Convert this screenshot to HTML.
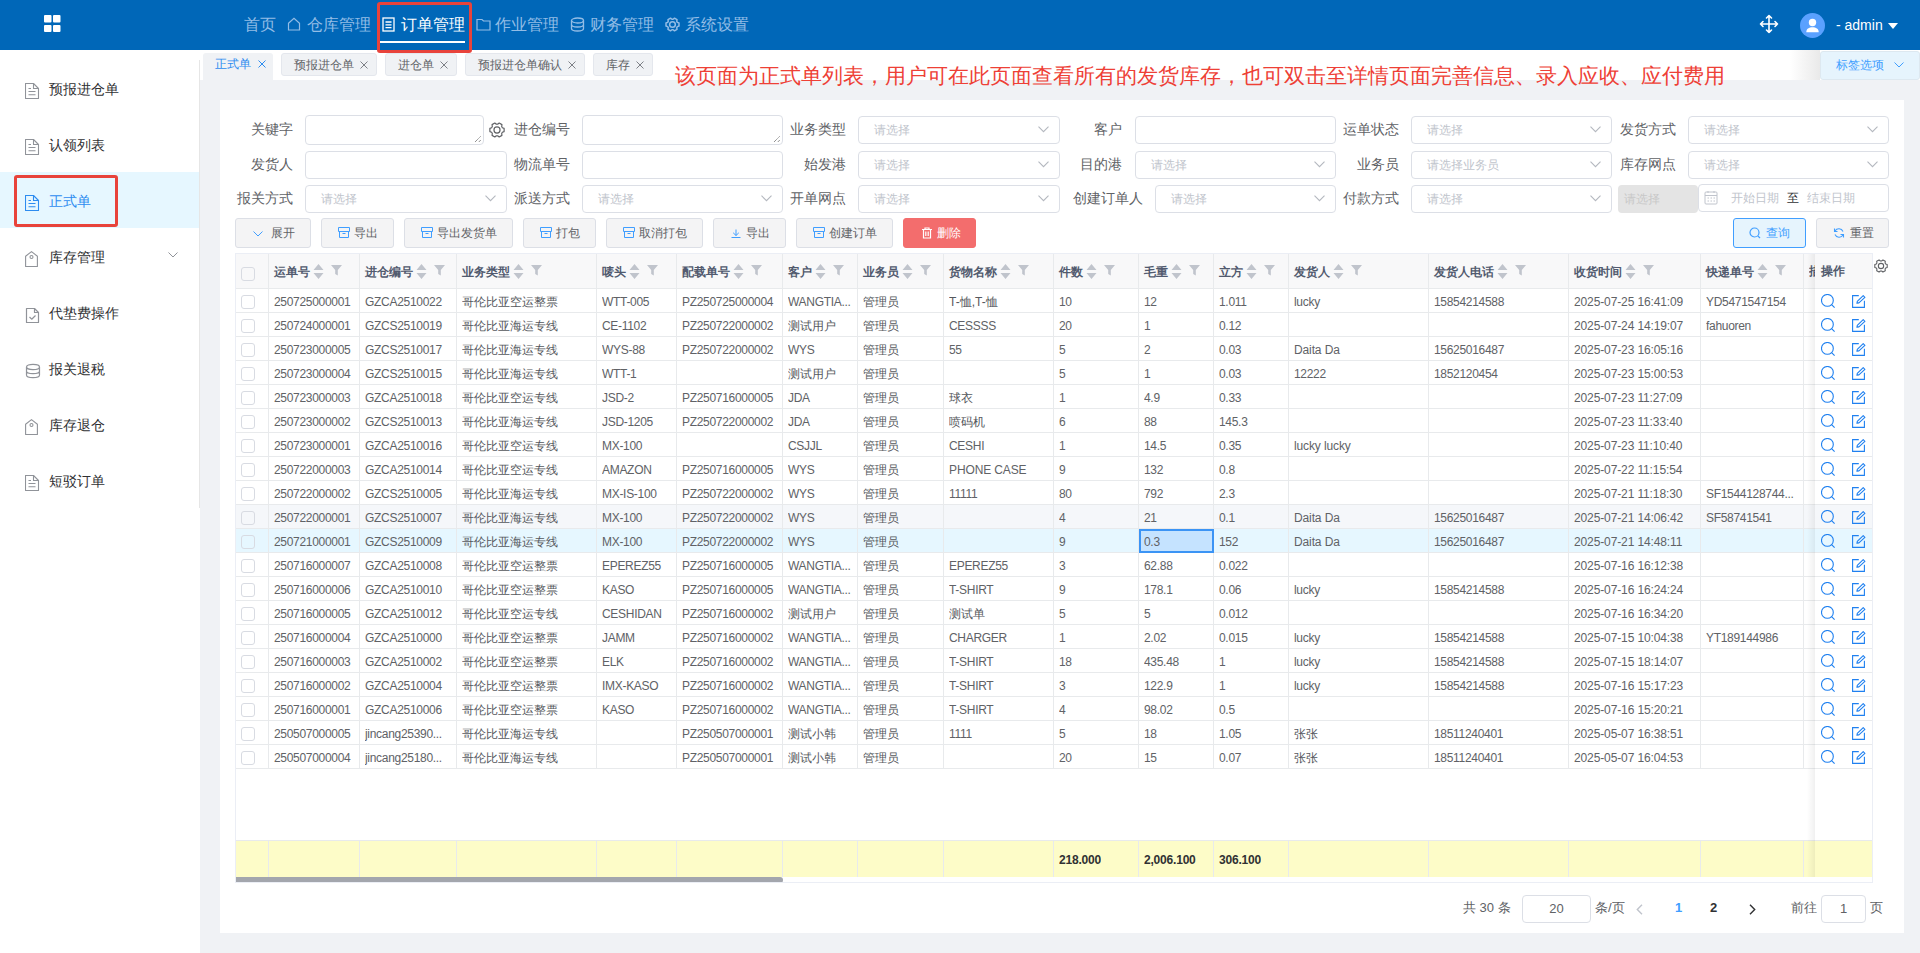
<!DOCTYPE html><html><head><meta charset="utf-8"><style>
*{box-sizing:border-box;margin:0;padding:0}
html,body{width:1920px;height:953px;overflow:hidden}
body{position:relative;background:#f0f2f5;font-family:"Liberation Sans",sans-serif;color:#606266;font-size:12px}
.a{position:absolute}
.hdr{left:0;top:0;width:1920px;height:50px;background:#0067b8}
.nav{top:0;height:50px;line-height:50px;font-size:16px;color:#93bde6;white-space:nowrap}
.nav.on{color:#fff}
.side{left:0;top:50px;width:200px;height:903px;background:#fff}
.sbord{left:199px;top:60px;width:1px;height:448px;background:#e6e6e6}
.mi{left:0;width:199px;height:56px;font-size:14px;color:#303133;line-height:56px}
.mi span{position:absolute;left:49px;top:1px}
.mi svg{position:absolute;left:25px;top:23px}
.tabbar{left:200px;top:50px;width:1720px;height:30px;background:#fff}
.tab{top:53px;height:23px;line-height:22px;font-size:12px;color:#606266;background:#f0f2f5;border:1px solid #e4e7ed;border-radius:3px;white-space:nowrap}
.tab .x{position:absolute;top:0;font-size:12px}
.card{left:220px;top:100px;width:1684px;height:833px;background:#fff}
.lbl{font-size:14px;color:#606266;line-height:18px;white-space:nowrap;text-align:right}
.inp{background:#fff;border:1px solid #dcdfe6;border-radius:4px}
.ph{position:absolute;left:15px;top:0;font-size:12px;color:#c0c4cc;white-space:nowrap}
.chev{position:absolute;right:10px;top:50%;margin-top:-4px}
.btn{top:218px;height:30px;border:1px solid #dcdfe6;background:#f4f4f5;border-radius:3px;font-size:12px;color:#606266;line-height:28px;white-space:nowrap}
.btn svg{position:absolute;top:8px}
.btn span{position:absolute;top:0}
.tbl{left:235px;top:253px;width:1638px;height:630px;border:1px solid #ebeef5;background:#fff;overflow:hidden}
.cell{position:absolute;height:24px;line-height:24px;font-size:12px;color:#606266;white-space:nowrap;overflow:hidden}
.hcell{position:absolute;height:35px;line-height:35px;font-size:12px;font-weight:bold;color:#515a6e;white-space:nowrap}
.vl{position:absolute;width:1px;background:#e8eaec}
.hl{position:absolute;height:1px;background:#e8eaec}
.cb{position:absolute;width:14px;height:14px;border:1.5px solid #d8dbe2;border-radius:3px}
</style></head><body><div class="a hdr"></div><svg class="a" style="left:43px;top:14px" width="19" height="19" viewBox="0 0 19 19" fill="#fff"><rect x="1" y="1" width="7.5" height="7.5" rx="1"/><rect x="10" y="1" width="7.5" height="7.5" rx="1"/><rect x="1" y="11" width="7.5" height="7" rx="1"/><rect x="10" y="11" width="7.5" height="7" rx="1"/></svg><div class="a nav" style="left:244px">首页</div><div class="a nav" style="left:307px">仓库管理</div><div class="a nav on" style="left:401px">订单管理</div><div class="a nav" style="left:495px">作业管理</div><div class="a nav" style="left:590px">财务管理</div><div class="a nav" style="left:685px">系统设置</div><svg class="a" style="left:287px;top:17px" width="14" height="14" viewBox="0 0 14 14" fill="none" stroke="#93bde6" stroke-width="1.2"><path d="M1.5 6.2 L7 1.2 L12.5 6.2 V13 H1.5 Z"/></svg><svg class="a" style="left:382px;top:17px" width="13" height="15" viewBox="0 0 13 15" fill="none" stroke="#fff" stroke-width="1.3"><rect x="1" y="1" width="11" height="13"/><path d="M3.5 5H9.5M3.5 7.8H9.5M3.5 10.6H9.5"/></svg><svg class="a" style="left:476px;top:18px" width="15" height="13" viewBox="0 0 15 13" fill="none" stroke="#93bde6" stroke-width="1.2"><path d="M1 1.5H6L7.5 3H14V12H1Z"/></svg><svg class="a" style="left:570px;top:17px" width="15" height="15" viewBox="0 0 15 15" fill="none" stroke="#93bde6" stroke-width="1.3"><ellipse cx="7.5" cy="3.5" rx="6" ry="2.5"/><path d="M1.5 3.5V11.5C1.5 12.9 4.2 14 7.5 14S13.5 12.9 13.5 11.5V3.5M1.5 7.5C1.5 8.9 4.2 10 7.5 10S13.5 8.9 13.5 7.5"/></svg><svg class="a" style="left:665px;top:17px" width="15" height="15" viewBox="0 0 15 15" fill="none" stroke="#93bde6" stroke-width="1.5" stroke-linejoin="round"><path d="M12.38 5.39 L13.99 6.05 L13.99 8.95 L12.38 9.61 L11.77 10.67 L12.00 12.40 L9.49 13.85 L8.11 12.78 L6.89 12.78 L5.51 13.85 L3.00 12.40 L3.23 10.67 L2.62 9.61 L1.01 8.95 L1.01 6.05 L2.62 5.39 L3.23 4.33 L3.00 2.60 L5.51 1.15 L6.89 2.22 L8.11 2.22 L9.49 1.15 L12.00 2.60 L11.77 4.33Z"/><circle cx="7.5" cy="7.5" r="2.85"/></svg><div class="a" style="left:377px;top:2px;width:95px;height:51px;border:3px solid #e8433b;border-radius:3px;z-index:10"></div><div class="a" style="left:380px;top:41px;width:85px;height:2px;background:#fff"></div><svg class="a" style="left:1759px;top:14px" width="20" height="20" viewBox="0 0 20 20" fill="none" stroke="#fff" stroke-width="1.6" stroke-linecap="round" stroke-linejoin="round"><path d="M10 1.5V18.5M1.5 10H18.5M7.5 4L10 1.5L12.5 4M7.5 16L10 18.5L12.5 16M4 7.5L1.5 10L4 12.5M16 7.5L18.5 10L16 12.5"/></svg><div class="a" style="left:1800px;top:13px;width:25px;height:25px;border-radius:50%;background:#5aa1ff"></div><svg class="a" style="left:1800px;top:13px" width="25" height="25" viewBox="0 0 25 25" fill="#fff"><circle cx="12.5" cy="9.5" r="3.7"/><path d="M6.3 19.3C6.3 15.6 9 14.2 12.5 14.2S18.7 15.6 18.7 19.3Z"/></svg><div class="a" style="left:1836px;top:16px;font-size:14px;color:#fff;line-height:18px;white-space:nowrap">- admin</div><svg class="a" style="left:1888px;top:23px" width="10" height="6" viewBox="0 0 10 6" fill="#fff"><path d="M0 0H10L5 6Z"/></svg><div class="a side"></div><div class="a sbord"></div><div class="a mi" style="top:60px;"><svg width="15" height="17" viewBox="0 0 15 17" fill="none" stroke="#909399" stroke-width="1.1" stroke-linejoin="round"><path d="M0.5 0.5H8.5L13.5 5.5V15.5H0.5Z"/><path d="M8.5 0.5V5.5H13.5"/><path d="M3.5 5.5H6M3.5 8.5H10.5M3.5 11.8H10.5"/></svg><span style="">预报进仓单</span></div><div class="a mi" style="top:116px;"><svg width="15" height="17" viewBox="0 0 15 17" fill="none" stroke="#909399" stroke-width="1.1" stroke-linejoin="round"><path d="M0.5 0.5H8.5L13.5 5.5V15.5H0.5Z"/><path d="M8.5 0.5V5.5H13.5"/><path d="M3.5 5.5H6M3.5 8.5H10.5M3.5 11.8H10.5"/></svg><span style="">认领列表</span></div><div class="a mi" style="top:172px;background:#e6f7ff;"><svg width="15" height="17" viewBox="0 0 15 17" fill="none" stroke="#2d8cf0" stroke-width="1.1" stroke-linejoin="round"><path d="M0.5 0.5H8.5L13.5 5.5V15.5H0.5Z"/><path d="M8.5 0.5V5.5H13.5"/><path d="M3.5 5.5H6M3.5 8.5H10.5M3.5 11.8H10.5"/></svg><span style="color:#2d8cf0;">正式单</span></div><div class="a mi" style="top:228px;"><svg width="14" height="17" viewBox="0 0 14 17" fill="none" stroke="#909399" stroke-width="1.1" stroke-linejoin="round"><path d="M6.5 0.6L12.4 5.2V15.5H0.6V5.2Z"/><circle cx="6.5" cy="6" r="1.5"/></svg><span style="">库存管理</span></div><div class="a mi" style="top:284px;"><svg width="15" height="17" viewBox="0 0 15 17" fill="none" stroke="#909399" stroke-width="1.2" stroke-linejoin="round"><path d="M1.5 1.5H9.5L13.5 5.5V15.5H1.5Z"/><path d="M9.5 1.5V5.5H13.5"/><path d="M4.5 10L6.7 12.2L10.5 8.5"/></svg><span style="">代垫费操作</span></div><div class="a mi" style="top:340px;"><svg width="16" height="16" viewBox="0 0 16 16" fill="none" stroke="#909399" stroke-width="1.2"><ellipse cx="8" cy="4" rx="6.5" ry="2.6"/><path d="M1.5 4V12C1.5 13.4 4.4 14.6 8 14.6S14.5 13.4 14.5 12V4M1.5 8C1.5 9.4 4.4 10.6 8 10.6S14.5 9.4 14.5 8"/></svg><span style="">报关退税</span></div><div class="a mi" style="top:396px;"><svg width="14" height="17" viewBox="0 0 14 17" fill="none" stroke="#909399" stroke-width="1.1" stroke-linejoin="round"><path d="M6.5 0.6L12.4 5.2V15.5H0.6V5.2Z"/><circle cx="6.5" cy="6" r="1.5"/></svg><span style="">库存退仓</span></div><div class="a mi" style="top:452px;"><svg width="15" height="17" viewBox="0 0 15 17" fill="none" stroke="#909399" stroke-width="1.1" stroke-linejoin="round"><path d="M0.5 0.5H8.5L13.5 5.5V15.5H0.5Z"/><path d="M8.5 0.5V5.5H13.5"/><path d="M3.5 5.5H6M3.5 8.5H10.5M3.5 11.8H10.5"/></svg><span style="">短驳订单</span></div><svg class="a" style="left:168px;top:252px" width="10" height="6" viewBox="0 0 10 6" fill="none" stroke="#909399" stroke-width="1"><path d="M0.5 0.5L5 5L9.5 0.5"/></svg><div class="a" style="left:14px;top:175px;width:104px;height:52px;border:3px solid #e8433b;border-radius:3px;z-index:10"></div><div class="a tabbar"></div><div class="a" style="left:203px;top:53px;width:70px;height:27px;background:#f0f2f5;border-radius:3px 3px 0 0"></div><div class="a" style="left:215px;top:53px;font-size:12px;line-height:22px;color:#2d8cf0;white-space:nowrap">正式单</div><svg class="a" style="left:258px;top:60px" width="8" height="8" viewBox="0 0 8 8" stroke="#2d8cf0" stroke-width="1"><path d="M0.5 0.5L7.5 7.5M7.5 0.5L0.5 7.5"/></svg><div class="a tab" style="left:281px;width:96px"><span class="a" style="left:12px;top:0">预报进仓单</span><svg class="x" style="right:8px;top:7px" width="8" height="8" viewBox="0 0 8 8" stroke="#7d8086" stroke-width="1"><path d="M0.5 0.5L7.5 7.5M7.5 0.5L0.5 7.5"/></svg></div><div class="a tab" style="left:385px;width:72px"><span class="a" style="left:12px;top:0">进仓单</span><svg class="x" style="right:8px;top:7px" width="8" height="8" viewBox="0 0 8 8" stroke="#7d8086" stroke-width="1"><path d="M0.5 0.5L7.5 7.5M7.5 0.5L0.5 7.5"/></svg></div><div class="a tab" style="left:465px;width:120px"><span class="a" style="left:12px;top:0">预报进仓单确认</span><svg class="x" style="right:8px;top:7px" width="8" height="8" viewBox="0 0 8 8" stroke="#7d8086" stroke-width="1"><path d="M0.5 0.5L7.5 7.5M7.5 0.5L0.5 7.5"/></svg></div><div class="a tab" style="left:593px;width:60px"><span class="a" style="left:12px;top:0">库存</span><svg class="x" style="right:8px;top:7px" width="8" height="8" viewBox="0 0 8 8" stroke="#7d8086" stroke-width="1"><path d="M0.5 0.5L7.5 7.5M7.5 0.5L0.5 7.5"/></svg></div><div class="a" style="left:675px;top:61px;font-size:21px;line-height:30px;color:#ee4036;white-space:nowrap">该页面为正式单列表，用户可在此页面查看所有的发货库存，也可双击至详情页面完善信息、录入应收、应付费用</div><div class="a" style="left:1790px;top:50px;width:30px;height:30px;background:linear-gradient(to right,rgba(255,255,255,0),#e9e9e9)"></div><div class="a" style="left:1820px;top:51px;width:100px;height:29px;background:#e6f4fd;border:1px solid #dde8f0;border-radius:3px"></div><div class="a" style="left:1836px;top:55px;font-size:12px;line-height:20px;color:#409eff;white-space:nowrap">标签选项</div><svg class="a" style="left:1894px;top:62px" width="10" height="6" viewBox="0 0 10 6" fill="none" stroke="#409eff" stroke-width="1"><path d="M0.5 0.5L5 5L9.5 0.5"/></svg><div class="a card"></div><div class="a lbl" style="right:1627px;top:120px">关键字</div><div class="a inp" style="left:305px;top:115px;width:179px;height:30px;"><svg style="position:absolute;right:1px;bottom:1px" width="8" height="8" viewBox="0 0 8 8" stroke="#555" stroke-width="0.9" stroke-dasharray="1 0.7"><path d="M1 7L7 1M4.8 7L7 4.8"/></svg></div><svg class="a" style="left:489px;top:122px" width="16" height="16" viewBox="0 0 16 16" fill="none" stroke="#606266" stroke-width="1.2" stroke-linejoin="round"><path d="M13.36 5.68 L15.12 6.41 L15.12 9.59 L13.36 10.32 L12.69 11.48 L12.94 13.37 L10.18 14.97 L8.67 13.80 L7.33 13.80 L5.82 14.97 L3.06 13.37 L3.31 11.48 L2.64 10.32 L0.88 9.59 L0.88 6.41 L2.64 5.68 L3.31 4.52 L3.06 2.63 L5.82 1.03 L7.33 2.20 L8.67 2.20 L10.18 1.03 L12.94 2.63 L12.69 4.52Z"/><circle cx="8.0" cy="8.0" r="3.04"/></svg><div class="a lbl" style="right:1350px;top:120px">进仓编号</div><div class="a inp" style="left:582px;top:115px;width:201px;height:30px;"><svg style="position:absolute;right:1px;bottom:1px" width="8" height="8" viewBox="0 0 8 8" stroke="#555" stroke-width="0.9" stroke-dasharray="1 0.7"><path d="M1 7L7 1M4.8 7L7 4.8"/></svg></div><div class="a lbl" style="right:1074px;top:120px">业务类型</div><div class="a inp" style="left:858px;top:116px;width:202px;height:28px;"><span class="ph" style="line-height:26px">请选择</span><svg class="chev" width="11" height="7" viewBox="0 0 11 7" fill="none" stroke="#b4b8bf" stroke-width="1.1"><path d="M0.5 0.7L5.5 5.7L10.5 0.7"/></svg></div><div class="a lbl" style="right:798px;top:120px">客户</div><div class="a inp" style="left:1135px;top:116px;width:201px;height:28px;"></div><div class="a lbl" style="right:521px;top:120px">运单状态</div><div class="a inp" style="left:1411px;top:116px;width:201px;height:28px;"><span class="ph" style="line-height:26px">请选择</span><svg class="chev" width="11" height="7" viewBox="0 0 11 7" fill="none" stroke="#b4b8bf" stroke-width="1.1"><path d="M0.5 0.7L5.5 5.7L10.5 0.7"/></svg></div><div class="a lbl" style="right:244px;top:120px">发货方式</div><div class="a inp" style="left:1688px;top:116px;width:201px;height:28px;"><span class="ph" style="line-height:26px">请选择</span><svg class="chev" width="11" height="7" viewBox="0 0 11 7" fill="none" stroke="#b4b8bf" stroke-width="1.1"><path d="M0.5 0.7L5.5 5.7L10.5 0.7"/></svg></div><div class="a lbl" style="right:1627px;top:155px">发货人</div><div class="a inp" style="left:305px;top:151px;width:202px;height:28px;"></div><div class="a lbl" style="right:1350px;top:155px">物流单号</div><div class="a inp" style="left:582px;top:151px;width:201px;height:28px;"></div><div class="a lbl" style="right:1074px;top:155px">始发港</div><div class="a inp" style="left:858px;top:151px;width:202px;height:28px;"><span class="ph" style="line-height:26px">请选择</span><svg class="chev" width="11" height="7" viewBox="0 0 11 7" fill="none" stroke="#b4b8bf" stroke-width="1.1"><path d="M0.5 0.7L5.5 5.7L10.5 0.7"/></svg></div><div class="a lbl" style="right:798px;top:155px">目的港</div><div class="a inp" style="left:1135px;top:151px;width:201px;height:28px;"><span class="ph" style="line-height:26px">请选择</span><svg class="chev" width="11" height="7" viewBox="0 0 11 7" fill="none" stroke="#b4b8bf" stroke-width="1.1"><path d="M0.5 0.7L5.5 5.7L10.5 0.7"/></svg></div><div class="a lbl" style="right:521px;top:155px">业务员</div><div class="a inp" style="left:1411px;top:151px;width:201px;height:28px;"><span class="ph" style="line-height:26px">请选择业务员</span><svg class="chev" width="11" height="7" viewBox="0 0 11 7" fill="none" stroke="#b4b8bf" stroke-width="1.1"><path d="M0.5 0.7L5.5 5.7L10.5 0.7"/></svg></div><div class="a lbl" style="right:244px;top:155px">库存网点</div><div class="a inp" style="left:1688px;top:151px;width:201px;height:28px;"><span class="ph" style="line-height:26px">请选择</span><svg class="chev" width="11" height="7" viewBox="0 0 11 7" fill="none" stroke="#b4b8bf" stroke-width="1.1"><path d="M0.5 0.7L5.5 5.7L10.5 0.7"/></svg></div><div class="a lbl" style="right:1627px;top:189px">报关方式</div><div class="a inp" style="left:305px;top:185px;width:202px;height:28px;"><span class="ph" style="line-height:26px">请选择</span><svg class="chev" width="11" height="7" viewBox="0 0 11 7" fill="none" stroke="#b4b8bf" stroke-width="1.1"><path d="M0.5 0.7L5.5 5.7L10.5 0.7"/></svg></div><div class="a lbl" style="right:1350px;top:189px">派送方式</div><div class="a inp" style="left:582px;top:185px;width:201px;height:28px;"><span class="ph" style="line-height:26px">请选择</span><svg class="chev" width="11" height="7" viewBox="0 0 11 7" fill="none" stroke="#b4b8bf" stroke-width="1.1"><path d="M0.5 0.7L5.5 5.7L10.5 0.7"/></svg></div><div class="a lbl" style="right:1074px;top:189px">开单网点</div><div class="a inp" style="left:858px;top:185px;width:202px;height:28px;"><span class="ph" style="line-height:26px">请选择</span><svg class="chev" width="11" height="7" viewBox="0 0 11 7" fill="none" stroke="#b4b8bf" stroke-width="1.1"><path d="M0.5 0.7L5.5 5.7L10.5 0.7"/></svg></div><div class="a lbl" style="right:777px;top:189px">创建订单人</div><div class="a inp" style="left:1155px;top:185px;width:181px;height:28px;"><span class="ph" style="line-height:26px">请选择</span><svg class="chev" width="11" height="7" viewBox="0 0 11 7" fill="none" stroke="#b4b8bf" stroke-width="1.1"><path d="M0.5 0.7L5.5 5.7L10.5 0.7"/></svg></div><div class="a lbl" style="right:521px;top:189px">付款方式</div><div class="a inp" style="left:1411px;top:185px;width:201px;height:28px;"><span class="ph" style="line-height:26px">请选择</span><svg class="chev" width="11" height="7" viewBox="0 0 11 7" fill="none" stroke="#b4b8bf" stroke-width="1.1"><path d="M0.5 0.7L5.5 5.7L10.5 0.7"/></svg></div><div class="a" style="left:1618px;top:185px;width:80px;height:28px;background:#e4e4e4;border-radius:4px"><span class="ph" style="left:6px;line-height:28px;color:#c8c8c8">请选择</span></div><div class="a inp" style="left:1698px;top:184px;width:191px;height:28px"></div><svg class="a" style="left:1704px;top:190px" width="14" height="15" viewBox="0 0 14 15" fill="none" stroke="#c0c4cc" stroke-width="1"><rect x="1" y="2" width="12" height="12" rx="1"/><path d="M1 5.5H13M4 1V3M10 1V3M3.5 8H5M6.5 8H8M9.5 8H11M3.5 11H5M6.5 11H8M9.5 11H11"/></svg><div class="a" style="left:1731px;top:188px;font-size:12px;line-height:20px;color:#c0c4cc;white-space:nowrap">开始日期</div><div class="a" style="left:1787px;top:188px;font-size:12px;line-height:20px;color:#303133">至</div><div class="a" style="left:1807px;top:188px;font-size:12px;line-height:20px;color:#c0c4cc;white-space:nowrap">结束日期</div><div class="a btn" style="left:235px;width:76px"><svg style="position:absolute;left:17px;top:12px" width="10" height="6" viewBox="0 0 10 6" fill="none" stroke="#409eff" stroke-width="1"><path d="M0.5 0.5L5 5L9.5 0.5"/></svg><span style="left:34.5px">展开</span></div><div class="a btn" style="left:321px;width:73px"><svg style="position:absolute;left:16px;top:8px" width="12" height="11" viewBox="0 0 12 11" fill="none" stroke="#409eff" stroke-width="1"><path d="M0.5 0.5H11.5V4.5H0.5Z"/><path d="M1.5 4.5V10.5H10.5V4.5M4.5 6.5H7.5"/></svg><span style="left:32.0px">导出</span></div><div class="a btn" style="left:404px;width:109px"><svg style="position:absolute;left:16px;top:8px" width="12" height="11" viewBox="0 0 12 11" fill="none" stroke="#409eff" stroke-width="1"><path d="M0.5 0.5H11.5V4.5H0.5Z"/><path d="M1.5 4.5V10.5H10.5V4.5M4.5 6.5H7.5"/></svg><span style="left:31.5px">导出发货单</span></div><div class="a btn" style="left:523px;width:73px"><svg style="position:absolute;left:16px;top:8px" width="12" height="11" viewBox="0 0 12 11" fill="none" stroke="#409eff" stroke-width="1"><path d="M0.5 0.5H11.5V4.5H0.5Z"/><path d="M1.5 4.5V10.5H10.5V4.5M4.5 6.5H7.5"/></svg><span style="left:32.0px">打包</span></div><div class="a btn" style="left:606px;width:97px"><svg style="position:absolute;left:16px;top:8px" width="12" height="11" viewBox="0 0 12 11" fill="none" stroke="#409eff" stroke-width="1"><path d="M0.5 0.5H11.5V4.5H0.5Z"/><path d="M1.5 4.5V10.5H10.5V4.5M4.5 6.5H7.5"/></svg><span style="left:31.799999999999955px">取消打包</span></div><div class="a btn" style="left:713px;width:73px"><svg style="position:absolute;left:17px;top:10px" width="10" height="9" viewBox="0 0 10 9" fill="none" stroke="#409eff" stroke-width="1"><path d="M5 0.5V6.5M2.2 3.8L5 6.5L7.8 3.8M0.5 8.5H9.5"/></svg><span style="left:31.5px">导出</span></div><div class="a btn" style="left:796px;width:97px"><svg style="position:absolute;left:16px;top:8px" width="12" height="11" viewBox="0 0 12 11" fill="none" stroke="#409eff" stroke-width="1"><path d="M0.5 0.5H11.5V4.5H0.5Z"/><path d="M1.5 4.5V10.5H10.5V4.5M4.5 6.5H7.5"/></svg><span style="left:31.899999999999977px">创建订单</span></div><div class="a btn" style="left:903px;width:73px;background:#f36d6d;border-color:#f36d6d;color:#fff"><svg style="position:absolute;left:17px;top:8px" width="12" height="12" viewBox="0 0 12 12" fill="none" stroke="#fff" stroke-width="1.2"><path d="M1 2.5H11M4 2.5V1H8V2.5M2.5 2.5V11H9.5V2.5M4.8 4.5V9M7.2 4.5V9"/></svg><span style="left:33px">删除</span></div><div class="a btn" style="left:1733px;width:73px;background:#e6f4fd;border-color:#409eff;color:#409eff"><svg style="position:absolute;left:15px;top:8px" width="12" height="12" viewBox="0 0 12 12" fill="none" stroke="#409eff" stroke-width="1.2"><circle cx="5.5" cy="5.5" r="4.5"/><path d="M8.8 8.8L11 11"/></svg><span style="left:32px">查询</span></div><div class="a btn" style="left:1816px;width:73px"><svg style="position:absolute;left:16px;top:8px" width="12" height="12" viewBox="0 0 12 12" fill="none" stroke="#409eff" stroke-width="1.1"><path d="M10 4.5A4.5 4.5 0 0 0 2 4M2 7.5A4.5 4.5 0 0 0 10 8M1.5 1.5V4.5H4.5M10.5 10.5V7.5H7.5"/></svg><span style="left:33px">重置</span></div><div class="a tbl"><div class="a" style="left:0;top:0;width:1638px;height:35px;background:#f8f8f9"></div><div class="a" style="left:0;top:251px;width:1638px;height:24px;background:#f5f7fa"></div><div class="a" style="left:0;top:275px;width:1638px;height:24px;background:#e6f7ff"></div><div class="a" style="left:0;top:587px;width:1638px;height:36px;background:#fdfcc8"></div><div class="hl" style="left:0;top:34px;width:1638px"></div><div class="hl" style="left:0;top:58px;width:1638px"></div><div class="hl" style="left:0;top:82px;width:1638px"></div><div class="hl" style="left:0;top:106px;width:1638px"></div><div class="hl" style="left:0;top:130px;width:1638px"></div><div class="hl" style="left:0;top:154px;width:1638px"></div><div class="hl" style="left:0;top:178px;width:1638px"></div><div class="hl" style="left:0;top:202px;width:1638px"></div><div class="hl" style="left:0;top:226px;width:1638px"></div><div class="hl" style="left:0;top:250px;width:1638px"></div><div class="hl" style="left:0;top:274px;width:1638px"></div><div class="hl" style="left:0;top:298px;width:1638px"></div><div class="hl" style="left:0;top:322px;width:1638px"></div><div class="hl" style="left:0;top:346px;width:1638px"></div><div class="hl" style="left:0;top:370px;width:1638px"></div><div class="hl" style="left:0;top:394px;width:1638px"></div><div class="hl" style="left:0;top:418px;width:1638px"></div><div class="hl" style="left:0;top:442px;width:1638px"></div><div class="hl" style="left:0;top:466px;width:1638px"></div><div class="hl" style="left:0;top:490px;width:1638px"></div><div class="hl" style="left:0;top:514px;width:1638px"></div><div class="hl" style="left:0;top:586px;width:1638px"></div><div class="vl" style="left:32px;top:0;height:515px"></div><div class="vl" style="left:32px;top:587px;height:36px"></div><div class="vl" style="left:123px;top:0;height:515px"></div><div class="vl" style="left:123px;top:587px;height:36px"></div><div class="vl" style="left:220px;top:0;height:515px"></div><div class="vl" style="left:220px;top:587px;height:36px"></div><div class="vl" style="left:360px;top:0;height:515px"></div><div class="vl" style="left:360px;top:587px;height:36px"></div><div class="vl" style="left:440px;top:0;height:515px"></div><div class="vl" style="left:440px;top:587px;height:36px"></div><div class="vl" style="left:546px;top:0;height:515px"></div><div class="vl" style="left:546px;top:587px;height:36px"></div><div class="vl" style="left:621px;top:0;height:515px"></div><div class="vl" style="left:621px;top:587px;height:36px"></div><div class="vl" style="left:707px;top:0;height:515px"></div><div class="vl" style="left:707px;top:587px;height:36px"></div><div class="vl" style="left:817px;top:0;height:515px"></div><div class="vl" style="left:817px;top:587px;height:36px"></div><div class="vl" style="left:902px;top:0;height:515px"></div><div class="vl" style="left:902px;top:587px;height:36px"></div><div class="vl" style="left:977px;top:0;height:515px"></div><div class="vl" style="left:977px;top:587px;height:36px"></div><div class="vl" style="left:1052px;top:0;height:515px"></div><div class="vl" style="left:1052px;top:587px;height:36px"></div><div class="vl" style="left:1192px;top:0;height:515px"></div><div class="vl" style="left:1192px;top:587px;height:36px"></div><div class="vl" style="left:1332px;top:0;height:515px"></div><div class="vl" style="left:1332px;top:587px;height:36px"></div><div class="vl" style="left:1464px;top:0;height:515px"></div><div class="vl" style="left:1464px;top:587px;height:36px"></div><div class="vl" style="left:1567px;top:0;height:515px"></div><div class="vl" style="left:1567px;top:587px;height:36px"></div><div class="hcell" style="left:38px;top:1px">运单号</div><div style="position:absolute;left:77px;top:-1px"><svg style="position:absolute;top:11px" width="11" height="16" viewBox="0 0 11 16" fill="#c0c4cc"><path d="M5.5 0L10.5 6H0.5Z M5.5 15L10.5 9H0.5Z"/></svg></div><div style="position:absolute;left:95px;top:0"><svg style="position:absolute;top:11px" width="11" height="11" viewBox="0 0 11 11" fill="#c0c4cc"><path d="M0 0H11L6.8 5V10.5L4.2 9V5Z"/></svg></div><div class="hcell" style="left:129px;top:1px">进仓编号</div><div style="position:absolute;left:180px;top:-1px"><svg style="position:absolute;top:11px" width="11" height="16" viewBox="0 0 11 16" fill="#c0c4cc"><path d="M5.5 0L10.5 6H0.5Z M5.5 15L10.5 9H0.5Z"/></svg></div><div style="position:absolute;left:198px;top:0"><svg style="position:absolute;top:11px" width="11" height="11" viewBox="0 0 11 11" fill="#c0c4cc"><path d="M0 0H11L6.8 5V10.5L4.2 9V5Z"/></svg></div><div class="hcell" style="left:226px;top:1px">业务类型</div><div style="position:absolute;left:277px;top:-1px"><svg style="position:absolute;top:11px" width="11" height="16" viewBox="0 0 11 16" fill="#c0c4cc"><path d="M5.5 0L10.5 6H0.5Z M5.5 15L10.5 9H0.5Z"/></svg></div><div style="position:absolute;left:295px;top:0"><svg style="position:absolute;top:11px" width="11" height="11" viewBox="0 0 11 11" fill="#c0c4cc"><path d="M0 0H11L6.8 5V10.5L4.2 9V5Z"/></svg></div><div class="hcell" style="left:366px;top:1px">唛头</div><div style="position:absolute;left:393px;top:-1px"><svg style="position:absolute;top:11px" width="11" height="16" viewBox="0 0 11 16" fill="#c0c4cc"><path d="M5.5 0L10.5 6H0.5Z M5.5 15L10.5 9H0.5Z"/></svg></div><div style="position:absolute;left:411px;top:0"><svg style="position:absolute;top:11px" width="11" height="11" viewBox="0 0 11 11" fill="#c0c4cc"><path d="M0 0H11L6.8 5V10.5L4.2 9V5Z"/></svg></div><div class="hcell" style="left:446px;top:1px">配载单号</div><div style="position:absolute;left:497px;top:-1px"><svg style="position:absolute;top:11px" width="11" height="16" viewBox="0 0 11 16" fill="#c0c4cc"><path d="M5.5 0L10.5 6H0.5Z M5.5 15L10.5 9H0.5Z"/></svg></div><div style="position:absolute;left:515px;top:0"><svg style="position:absolute;top:11px" width="11" height="11" viewBox="0 0 11 11" fill="#c0c4cc"><path d="M0 0H11L6.8 5V10.5L4.2 9V5Z"/></svg></div><div class="hcell" style="left:552px;top:1px">客户</div><div style="position:absolute;left:579px;top:-1px"><svg style="position:absolute;top:11px" width="11" height="16" viewBox="0 0 11 16" fill="#c0c4cc"><path d="M5.5 0L10.5 6H0.5Z M5.5 15L10.5 9H0.5Z"/></svg></div><div style="position:absolute;left:597px;top:0"><svg style="position:absolute;top:11px" width="11" height="11" viewBox="0 0 11 11" fill="#c0c4cc"><path d="M0 0H11L6.8 5V10.5L4.2 9V5Z"/></svg></div><div class="hcell" style="left:627px;top:1px">业务员</div><div style="position:absolute;left:666px;top:-1px"><svg style="position:absolute;top:11px" width="11" height="16" viewBox="0 0 11 16" fill="#c0c4cc"><path d="M5.5 0L10.5 6H0.5Z M5.5 15L10.5 9H0.5Z"/></svg></div><div style="position:absolute;left:684px;top:0"><svg style="position:absolute;top:11px" width="11" height="11" viewBox="0 0 11 11" fill="#c0c4cc"><path d="M0 0H11L6.8 5V10.5L4.2 9V5Z"/></svg></div><div class="hcell" style="left:713px;top:1px">货物名称</div><div style="position:absolute;left:764px;top:-1px"><svg style="position:absolute;top:11px" width="11" height="16" viewBox="0 0 11 16" fill="#c0c4cc"><path d="M5.5 0L10.5 6H0.5Z M5.5 15L10.5 9H0.5Z"/></svg></div><div style="position:absolute;left:782px;top:0"><svg style="position:absolute;top:11px" width="11" height="11" viewBox="0 0 11 11" fill="#c0c4cc"><path d="M0 0H11L6.8 5V10.5L4.2 9V5Z"/></svg></div><div class="hcell" style="left:823px;top:1px">件数</div><div style="position:absolute;left:850px;top:-1px"><svg style="position:absolute;top:11px" width="11" height="16" viewBox="0 0 11 16" fill="#c0c4cc"><path d="M5.5 0L10.5 6H0.5Z M5.5 15L10.5 9H0.5Z"/></svg></div><div style="position:absolute;left:868px;top:0"><svg style="position:absolute;top:11px" width="11" height="11" viewBox="0 0 11 11" fill="#c0c4cc"><path d="M0 0H11L6.8 5V10.5L4.2 9V5Z"/></svg></div><div class="hcell" style="left:908px;top:1px">毛重</div><div style="position:absolute;left:935px;top:-1px"><svg style="position:absolute;top:11px" width="11" height="16" viewBox="0 0 11 16" fill="#c0c4cc"><path d="M5.5 0L10.5 6H0.5Z M5.5 15L10.5 9H0.5Z"/></svg></div><div style="position:absolute;left:953px;top:0"><svg style="position:absolute;top:11px" width="11" height="11" viewBox="0 0 11 11" fill="#c0c4cc"><path d="M0 0H11L6.8 5V10.5L4.2 9V5Z"/></svg></div><div class="hcell" style="left:983px;top:1px">立方</div><div style="position:absolute;left:1010px;top:-1px"><svg style="position:absolute;top:11px" width="11" height="16" viewBox="0 0 11 16" fill="#c0c4cc"><path d="M5.5 0L10.5 6H0.5Z M5.5 15L10.5 9H0.5Z"/></svg></div><div style="position:absolute;left:1028px;top:0"><svg style="position:absolute;top:11px" width="11" height="11" viewBox="0 0 11 11" fill="#c0c4cc"><path d="M0 0H11L6.8 5V10.5L4.2 9V5Z"/></svg></div><div class="hcell" style="left:1058px;top:1px">发货人</div><div style="position:absolute;left:1097px;top:-1px"><svg style="position:absolute;top:11px" width="11" height="16" viewBox="0 0 11 16" fill="#c0c4cc"><path d="M5.5 0L10.5 6H0.5Z M5.5 15L10.5 9H0.5Z"/></svg></div><div style="position:absolute;left:1115px;top:0"><svg style="position:absolute;top:11px" width="11" height="11" viewBox="0 0 11 11" fill="#c0c4cc"><path d="M0 0H11L6.8 5V10.5L4.2 9V5Z"/></svg></div><div class="hcell" style="left:1198px;top:1px">发货人电话</div><div style="position:absolute;left:1261px;top:-1px"><svg style="position:absolute;top:11px" width="11" height="16" viewBox="0 0 11 16" fill="#c0c4cc"><path d="M5.5 0L10.5 6H0.5Z M5.5 15L10.5 9H0.5Z"/></svg></div><div style="position:absolute;left:1279px;top:0"><svg style="position:absolute;top:11px" width="11" height="11" viewBox="0 0 11 11" fill="#c0c4cc"><path d="M0 0H11L6.8 5V10.5L4.2 9V5Z"/></svg></div><div class="hcell" style="left:1338px;top:1px">收货时间</div><div style="position:absolute;left:1389px;top:-1px"><svg style="position:absolute;top:11px" width="11" height="16" viewBox="0 0 11 16" fill="#c0c4cc"><path d="M5.5 0L10.5 6H0.5Z M5.5 15L10.5 9H0.5Z"/></svg></div><div style="position:absolute;left:1407px;top:0"><svg style="position:absolute;top:11px" width="11" height="11" viewBox="0 0 11 11" fill="#c0c4cc"><path d="M0 0H11L6.8 5V10.5L4.2 9V5Z"/></svg></div><div class="hcell" style="left:1470px;top:1px">快递单号</div><div style="position:absolute;left:1521px;top:-1px"><svg style="position:absolute;top:11px" width="11" height="16" viewBox="0 0 11 16" fill="#c0c4cc"><path d="M5.5 0L10.5 6H0.5Z M5.5 15L10.5 9H0.5Z"/></svg></div><div style="position:absolute;left:1539px;top:0"><svg style="position:absolute;top:11px" width="11" height="11" viewBox="0 0 11 11" fill="#c0c4cc"><path d="M0 0H11L6.8 5V10.5L4.2 9V5Z"/></svg></div><div class="cb" style="left:5px;top:13px"></div><div class="cb" style="left:5px;top:41px"></div><div class="cb" style="left:5px;top:65px"></div><div class="cb" style="left:5px;top:89px"></div><div class="cb" style="left:5px;top:113px"></div><div class="cb" style="left:5px;top:137px"></div><div class="cb" style="left:5px;top:161px"></div><div class="cb" style="left:5px;top:185px"></div><div class="cb" style="left:5px;top:209px"></div><div class="cb" style="left:5px;top:233px"></div><div class="cb" style="left:5px;top:257px"></div><div class="cb" style="left:5px;top:281px"></div><div class="cb" style="left:5px;top:305px"></div><div class="cb" style="left:5px;top:329px"></div><div class="cb" style="left:5px;top:353px"></div><div class="cb" style="left:5px;top:377px"></div><div class="cb" style="left:5px;top:401px"></div><div class="cb" style="left:5px;top:425px"></div><div class="cb" style="left:5px;top:449px"></div><div class="cb" style="left:5px;top:473px"></div><div class="cb" style="left:5px;top:497px"></div><div class="cell" style="left:38px;top:36px;width:83px;letter-spacing:-0.3px;">250725000001</div><div class="cell" style="left:129px;top:36px;width:89px;letter-spacing:-0.3px;">GZCA2510022</div><div class="cell" style="left:226px;top:36px;width:132px;color:#55585d;">哥伦比亚空运整票</div><div class="cell" style="left:366px;top:36px;width:72px;letter-spacing:-0.3px;">WTT-005</div><div class="cell" style="left:446px;top:36px;width:98px;letter-spacing:-0.3px;">PZ250725000004</div><div class="cell" style="left:552px;top:36px;width:67px;letter-spacing:-0.3px;">WANGTIA...</div><div class="cell" style="left:627px;top:36px;width:78px;color:#55585d;">管理员</div><div class="cell" style="left:713px;top:36px;width:102px;color:#55585d;">T-恤,T-恤</div><div class="cell" style="left:823px;top:36px;width:77px;letter-spacing:-0.3px;">10</div><div class="cell" style="left:908px;top:36px;width:67px;letter-spacing:-0.3px;">12</div><div class="cell" style="left:983px;top:36px;width:67px;letter-spacing:-0.3px;">1.011</div><div class="cell" style="left:1058px;top:36px;width:132px;letter-spacing:-0.3px;">lucky</div><div class="cell" style="left:1198px;top:36px;width:132px;letter-spacing:-0.3px;">15854214588</div><div class="cell" style="left:1338px;top:36px;width:124px;letter-spacing:-0.12px;">2025-07-25 16:41:09</div><div class="cell" style="left:1470px;top:36px;width:95px;letter-spacing:-0.3px;">YD5471547154</div><div class="cell" style="left:38px;top:60px;width:83px;letter-spacing:-0.3px;">250724000001</div><div class="cell" style="left:129px;top:60px;width:89px;letter-spacing:-0.3px;">GZCS2510019</div><div class="cell" style="left:226px;top:60px;width:132px;color:#55585d;">哥伦比亚海运专线</div><div class="cell" style="left:366px;top:60px;width:72px;letter-spacing:-0.3px;">CE-1102</div><div class="cell" style="left:446px;top:60px;width:98px;letter-spacing:-0.3px;">PZ250722000002</div><div class="cell" style="left:552px;top:60px;width:67px;color:#55585d;">测试用户</div><div class="cell" style="left:627px;top:60px;width:78px;color:#55585d;">管理员</div><div class="cell" style="left:713px;top:60px;width:102px;letter-spacing:-0.3px;">CESSSS</div><div class="cell" style="left:823px;top:60px;width:77px;letter-spacing:-0.3px;">20</div><div class="cell" style="left:908px;top:60px;width:67px;letter-spacing:-0.3px;">1</div><div class="cell" style="left:983px;top:60px;width:67px;letter-spacing:-0.3px;">0.12</div><div class="cell" style="left:1338px;top:60px;width:124px;letter-spacing:-0.12px;">2025-07-24 14:19:07</div><div class="cell" style="left:1470px;top:60px;width:95px;letter-spacing:-0.3px;">fahuoren</div><div class="cell" style="left:38px;top:84px;width:83px;letter-spacing:-0.3px;">250723000005</div><div class="cell" style="left:129px;top:84px;width:89px;letter-spacing:-0.3px;">GZCS2510017</div><div class="cell" style="left:226px;top:84px;width:132px;color:#55585d;">哥伦比亚海运专线</div><div class="cell" style="left:366px;top:84px;width:72px;letter-spacing:-0.3px;">WYS-88</div><div class="cell" style="left:446px;top:84px;width:98px;letter-spacing:-0.3px;">PZ250722000002</div><div class="cell" style="left:552px;top:84px;width:67px;letter-spacing:-0.3px;">WYS</div><div class="cell" style="left:627px;top:84px;width:78px;color:#55585d;">管理员</div><div class="cell" style="left:713px;top:84px;width:102px;letter-spacing:-0.3px;">55</div><div class="cell" style="left:823px;top:84px;width:77px;letter-spacing:-0.3px;">5</div><div class="cell" style="left:908px;top:84px;width:67px;letter-spacing:-0.3px;">2</div><div class="cell" style="left:983px;top:84px;width:67px;letter-spacing:-0.3px;">0.03</div><div class="cell" style="left:1058px;top:84px;width:132px;letter-spacing:-0.12px;">Daita Da</div><div class="cell" style="left:1198px;top:84px;width:132px;letter-spacing:-0.3px;">15625016487</div><div class="cell" style="left:1338px;top:84px;width:124px;letter-spacing:-0.12px;">2025-07-23 16:05:16</div><div class="cell" style="left:38px;top:108px;width:83px;letter-spacing:-0.3px;">250723000004</div><div class="cell" style="left:129px;top:108px;width:89px;letter-spacing:-0.3px;">GZCS2510015</div><div class="cell" style="left:226px;top:108px;width:132px;color:#55585d;">哥伦比亚海运专线</div><div class="cell" style="left:366px;top:108px;width:72px;letter-spacing:-0.3px;">WTT-1</div><div class="cell" style="left:552px;top:108px;width:67px;color:#55585d;">测试用户</div><div class="cell" style="left:627px;top:108px;width:78px;color:#55585d;">管理员</div><div class="cell" style="left:823px;top:108px;width:77px;letter-spacing:-0.3px;">5</div><div class="cell" style="left:908px;top:108px;width:67px;letter-spacing:-0.3px;">1</div><div class="cell" style="left:983px;top:108px;width:67px;letter-spacing:-0.3px;">0.03</div><div class="cell" style="left:1058px;top:108px;width:132px;letter-spacing:-0.3px;">12222</div><div class="cell" style="left:1198px;top:108px;width:132px;letter-spacing:-0.3px;">1852120454</div><div class="cell" style="left:1338px;top:108px;width:124px;letter-spacing:-0.12px;">2025-07-23 15:00:53</div><div class="cell" style="left:38px;top:132px;width:83px;letter-spacing:-0.3px;">250723000003</div><div class="cell" style="left:129px;top:132px;width:89px;letter-spacing:-0.3px;">GZCA2510018</div><div class="cell" style="left:226px;top:132px;width:132px;color:#55585d;">哥伦比亚空运专线</div><div class="cell" style="left:366px;top:132px;width:72px;letter-spacing:-0.3px;">JSD-2</div><div class="cell" style="left:446px;top:132px;width:98px;letter-spacing:-0.3px;">PZ250716000005</div><div class="cell" style="left:552px;top:132px;width:67px;letter-spacing:-0.3px;">JDA</div><div class="cell" style="left:627px;top:132px;width:78px;color:#55585d;">管理员</div><div class="cell" style="left:713px;top:132px;width:102px;color:#55585d;">球衣</div><div class="cell" style="left:823px;top:132px;width:77px;letter-spacing:-0.3px;">1</div><div class="cell" style="left:908px;top:132px;width:67px;letter-spacing:-0.3px;">4.9</div><div class="cell" style="left:983px;top:132px;width:67px;letter-spacing:-0.3px;">0.33</div><div class="cell" style="left:1338px;top:132px;width:124px;letter-spacing:-0.12px;">2025-07-23 11:27:09</div><div class="cell" style="left:38px;top:156px;width:83px;letter-spacing:-0.3px;">250723000002</div><div class="cell" style="left:129px;top:156px;width:89px;letter-spacing:-0.3px;">GZCS2510013</div><div class="cell" style="left:226px;top:156px;width:132px;color:#55585d;">哥伦比亚海运专线</div><div class="cell" style="left:366px;top:156px;width:72px;letter-spacing:-0.3px;">JSD-1205</div><div class="cell" style="left:446px;top:156px;width:98px;letter-spacing:-0.3px;">PZ250722000002</div><div class="cell" style="left:552px;top:156px;width:67px;letter-spacing:-0.3px;">JDA</div><div class="cell" style="left:627px;top:156px;width:78px;color:#55585d;">管理员</div><div class="cell" style="left:713px;top:156px;width:102px;color:#55585d;">喷码机</div><div class="cell" style="left:823px;top:156px;width:77px;letter-spacing:-0.3px;">6</div><div class="cell" style="left:908px;top:156px;width:67px;letter-spacing:-0.3px;">88</div><div class="cell" style="left:983px;top:156px;width:67px;letter-spacing:-0.3px;">145.3</div><div class="cell" style="left:1338px;top:156px;width:124px;letter-spacing:-0.12px;">2025-07-23 11:33:40</div><div class="cell" style="left:38px;top:180px;width:83px;letter-spacing:-0.3px;">250723000001</div><div class="cell" style="left:129px;top:180px;width:89px;letter-spacing:-0.3px;">GZCA2510016</div><div class="cell" style="left:226px;top:180px;width:132px;color:#55585d;">哥伦比亚空运专线</div><div class="cell" style="left:366px;top:180px;width:72px;letter-spacing:-0.3px;">MX-100</div><div class="cell" style="left:552px;top:180px;width:67px;letter-spacing:-0.3px;">CSJJL</div><div class="cell" style="left:627px;top:180px;width:78px;color:#55585d;">管理员</div><div class="cell" style="left:713px;top:180px;width:102px;letter-spacing:-0.3px;">CESHI</div><div class="cell" style="left:823px;top:180px;width:77px;letter-spacing:-0.3px;">1</div><div class="cell" style="left:908px;top:180px;width:67px;letter-spacing:-0.3px;">14.5</div><div class="cell" style="left:983px;top:180px;width:67px;letter-spacing:-0.3px;">0.35</div><div class="cell" style="left:1058px;top:180px;width:132px;letter-spacing:-0.12px;">lucky lucky</div><div class="cell" style="left:1338px;top:180px;width:124px;letter-spacing:-0.12px;">2025-07-23 11:10:40</div><div class="cell" style="left:38px;top:204px;width:83px;letter-spacing:-0.3px;">250722000003</div><div class="cell" style="left:129px;top:204px;width:89px;letter-spacing:-0.3px;">GZCA2510014</div><div class="cell" style="left:226px;top:204px;width:132px;color:#55585d;">哥伦比亚空运专线</div><div class="cell" style="left:366px;top:204px;width:72px;letter-spacing:-0.3px;">AMAZON</div><div class="cell" style="left:446px;top:204px;width:98px;letter-spacing:-0.3px;">PZ250716000005</div><div class="cell" style="left:552px;top:204px;width:67px;letter-spacing:-0.3px;">WYS</div><div class="cell" style="left:627px;top:204px;width:78px;color:#55585d;">管理员</div><div class="cell" style="left:713px;top:204px;width:102px;letter-spacing:-0.12px;">PHONE CASE</div><div class="cell" style="left:823px;top:204px;width:77px;letter-spacing:-0.3px;">9</div><div class="cell" style="left:908px;top:204px;width:67px;letter-spacing:-0.3px;">132</div><div class="cell" style="left:983px;top:204px;width:67px;letter-spacing:-0.3px;">0.8</div><div class="cell" style="left:1338px;top:204px;width:124px;letter-spacing:-0.12px;">2025-07-22 11:15:54</div><div class="cell" style="left:38px;top:228px;width:83px;letter-spacing:-0.3px;">250722000002</div><div class="cell" style="left:129px;top:228px;width:89px;letter-spacing:-0.3px;">GZCS2510005</div><div class="cell" style="left:226px;top:228px;width:132px;color:#55585d;">哥伦比亚海运专线</div><div class="cell" style="left:366px;top:228px;width:72px;letter-spacing:-0.3px;">MX-IS-100</div><div class="cell" style="left:446px;top:228px;width:98px;letter-spacing:-0.3px;">PZ250722000002</div><div class="cell" style="left:552px;top:228px;width:67px;letter-spacing:-0.3px;">WYS</div><div class="cell" style="left:627px;top:228px;width:78px;color:#55585d;">管理员</div><div class="cell" style="left:713px;top:228px;width:102px;letter-spacing:-0.3px;">11111</div><div class="cell" style="left:823px;top:228px;width:77px;letter-spacing:-0.3px;">80</div><div class="cell" style="left:908px;top:228px;width:67px;letter-spacing:-0.3px;">792</div><div class="cell" style="left:983px;top:228px;width:67px;letter-spacing:-0.3px;">2.3</div><div class="cell" style="left:1338px;top:228px;width:124px;letter-spacing:-0.12px;">2025-07-21 11:18:30</div><div class="cell" style="left:1470px;top:228px;width:95px;letter-spacing:-0.3px;">SF1544128744...</div><div class="cell" style="left:38px;top:252px;width:83px;letter-spacing:-0.3px;">250722000001</div><div class="cell" style="left:129px;top:252px;width:89px;letter-spacing:-0.3px;">GZCS2510007</div><div class="cell" style="left:226px;top:252px;width:132px;color:#55585d;">哥伦比亚海运专线</div><div class="cell" style="left:366px;top:252px;width:72px;letter-spacing:-0.3px;">MX-100</div><div class="cell" style="left:446px;top:252px;width:98px;letter-spacing:-0.3px;">PZ250722000002</div><div class="cell" style="left:552px;top:252px;width:67px;letter-spacing:-0.3px;">WYS</div><div class="cell" style="left:627px;top:252px;width:78px;color:#55585d;">管理员</div><div class="cell" style="left:823px;top:252px;width:77px;letter-spacing:-0.3px;">4</div><div class="cell" style="left:908px;top:252px;width:67px;letter-spacing:-0.3px;">21</div><div class="cell" style="left:983px;top:252px;width:67px;letter-spacing:-0.3px;">0.1</div><div class="cell" style="left:1058px;top:252px;width:132px;letter-spacing:-0.12px;">Daita Da</div><div class="cell" style="left:1198px;top:252px;width:132px;letter-spacing:-0.3px;">15625016487</div><div class="cell" style="left:1338px;top:252px;width:124px;letter-spacing:-0.12px;">2025-07-21 14:06:42</div><div class="cell" style="left:1470px;top:252px;width:95px;letter-spacing:-0.3px;">SF58741541</div><div class="cell" style="left:38px;top:276px;width:83px;letter-spacing:-0.3px;">250721000001</div><div class="cell" style="left:129px;top:276px;width:89px;letter-spacing:-0.3px;">GZCS2510009</div><div class="cell" style="left:226px;top:276px;width:132px;color:#55585d;">哥伦比亚海运专线</div><div class="cell" style="left:366px;top:276px;width:72px;letter-spacing:-0.3px;">MX-100</div><div class="cell" style="left:446px;top:276px;width:98px;letter-spacing:-0.3px;">PZ250722000002</div><div class="cell" style="left:552px;top:276px;width:67px;letter-spacing:-0.3px;">WYS</div><div class="cell" style="left:627px;top:276px;width:78px;color:#55585d;">管理员</div><div class="cell" style="left:823px;top:276px;width:77px;letter-spacing:-0.3px;">9</div><div class="cell" style="left:908px;top:276px;width:67px;letter-spacing:-0.3px;">0.3</div><div class="cell" style="left:983px;top:276px;width:67px;letter-spacing:-0.3px;">152</div><div class="cell" style="left:1058px;top:276px;width:132px;letter-spacing:-0.12px;">Daita Da</div><div class="cell" style="left:1198px;top:276px;width:132px;letter-spacing:-0.3px;">15625016487</div><div class="cell" style="left:1338px;top:276px;width:124px;letter-spacing:-0.12px;">2025-07-21 14:48:11</div><div class="cell" style="left:38px;top:300px;width:83px;letter-spacing:-0.3px;">250716000007</div><div class="cell" style="left:129px;top:300px;width:89px;letter-spacing:-0.3px;">GZCA2510008</div><div class="cell" style="left:226px;top:300px;width:132px;color:#55585d;">哥伦比亚空运整票</div><div class="cell" style="left:366px;top:300px;width:72px;letter-spacing:-0.3px;">EPEREZ55</div><div class="cell" style="left:446px;top:300px;width:98px;letter-spacing:-0.3px;">PZ250716000005</div><div class="cell" style="left:552px;top:300px;width:67px;letter-spacing:-0.3px;">WANGTIA...</div><div class="cell" style="left:627px;top:300px;width:78px;color:#55585d;">管理员</div><div class="cell" style="left:713px;top:300px;width:102px;letter-spacing:-0.3px;">EPEREZ55</div><div class="cell" style="left:823px;top:300px;width:77px;letter-spacing:-0.3px;">3</div><div class="cell" style="left:908px;top:300px;width:67px;letter-spacing:-0.3px;">62.88</div><div class="cell" style="left:983px;top:300px;width:67px;letter-spacing:-0.3px;">0.022</div><div class="cell" style="left:1338px;top:300px;width:124px;letter-spacing:-0.12px;">2025-07-16 16:12:38</div><div class="cell" style="left:38px;top:324px;width:83px;letter-spacing:-0.3px;">250716000006</div><div class="cell" style="left:129px;top:324px;width:89px;letter-spacing:-0.3px;">GZCA2510010</div><div class="cell" style="left:226px;top:324px;width:132px;color:#55585d;">哥伦比亚空运整票</div><div class="cell" style="left:366px;top:324px;width:72px;letter-spacing:-0.3px;">KASO</div><div class="cell" style="left:446px;top:324px;width:98px;letter-spacing:-0.3px;">PZ250716000005</div><div class="cell" style="left:552px;top:324px;width:67px;letter-spacing:-0.3px;">WANGTIA...</div><div class="cell" style="left:627px;top:324px;width:78px;color:#55585d;">管理员</div><div class="cell" style="left:713px;top:324px;width:102px;letter-spacing:-0.3px;">T-SHIRT</div><div class="cell" style="left:823px;top:324px;width:77px;letter-spacing:-0.3px;">9</div><div class="cell" style="left:908px;top:324px;width:67px;letter-spacing:-0.3px;">178.1</div><div class="cell" style="left:983px;top:324px;width:67px;letter-spacing:-0.3px;">0.06</div><div class="cell" style="left:1058px;top:324px;width:132px;letter-spacing:-0.3px;">lucky</div><div class="cell" style="left:1198px;top:324px;width:132px;letter-spacing:-0.3px;">15854214588</div><div class="cell" style="left:1338px;top:324px;width:124px;letter-spacing:-0.12px;">2025-07-16 16:24:24</div><div class="cell" style="left:38px;top:348px;width:83px;letter-spacing:-0.3px;">250716000005</div><div class="cell" style="left:129px;top:348px;width:89px;letter-spacing:-0.3px;">GZCA2510012</div><div class="cell" style="left:226px;top:348px;width:132px;color:#55585d;">哥伦比亚空运专线</div><div class="cell" style="left:366px;top:348px;width:72px;letter-spacing:-0.3px;">CESHIDAN</div><div class="cell" style="left:446px;top:348px;width:98px;letter-spacing:-0.3px;">PZ250716000002</div><div class="cell" style="left:552px;top:348px;width:67px;color:#55585d;">测试用户</div><div class="cell" style="left:627px;top:348px;width:78px;color:#55585d;">管理员</div><div class="cell" style="left:713px;top:348px;width:102px;color:#55585d;">测试单</div><div class="cell" style="left:823px;top:348px;width:77px;letter-spacing:-0.3px;">5</div><div class="cell" style="left:908px;top:348px;width:67px;letter-spacing:-0.3px;">5</div><div class="cell" style="left:983px;top:348px;width:67px;letter-spacing:-0.3px;">0.012</div><div class="cell" style="left:1338px;top:348px;width:124px;letter-spacing:-0.12px;">2025-07-16 16:34:20</div><div class="cell" style="left:38px;top:372px;width:83px;letter-spacing:-0.3px;">250716000004</div><div class="cell" style="left:129px;top:372px;width:89px;letter-spacing:-0.3px;">GZCA2510000</div><div class="cell" style="left:226px;top:372px;width:132px;color:#55585d;">哥伦比亚空运整票</div><div class="cell" style="left:366px;top:372px;width:72px;letter-spacing:-0.3px;">JAMM</div><div class="cell" style="left:446px;top:372px;width:98px;letter-spacing:-0.3px;">PZ250716000002</div><div class="cell" style="left:552px;top:372px;width:67px;letter-spacing:-0.3px;">WANGTIA...</div><div class="cell" style="left:627px;top:372px;width:78px;color:#55585d;">管理员</div><div class="cell" style="left:713px;top:372px;width:102px;letter-spacing:-0.3px;">CHARGER</div><div class="cell" style="left:823px;top:372px;width:77px;letter-spacing:-0.3px;">1</div><div class="cell" style="left:908px;top:372px;width:67px;letter-spacing:-0.3px;">2.02</div><div class="cell" style="left:983px;top:372px;width:67px;letter-spacing:-0.3px;">0.015</div><div class="cell" style="left:1058px;top:372px;width:132px;letter-spacing:-0.3px;">lucky</div><div class="cell" style="left:1198px;top:372px;width:132px;letter-spacing:-0.3px;">15854214588</div><div class="cell" style="left:1338px;top:372px;width:124px;letter-spacing:-0.12px;">2025-07-15 10:04:38</div><div class="cell" style="left:1470px;top:372px;width:95px;letter-spacing:-0.3px;">YT189144986</div><div class="cell" style="left:38px;top:396px;width:83px;letter-spacing:-0.3px;">250716000003</div><div class="cell" style="left:129px;top:396px;width:89px;letter-spacing:-0.3px;">GZCA2510002</div><div class="cell" style="left:226px;top:396px;width:132px;color:#55585d;">哥伦比亚空运整票</div><div class="cell" style="left:366px;top:396px;width:72px;letter-spacing:-0.3px;">ELK</div><div class="cell" style="left:446px;top:396px;width:98px;letter-spacing:-0.3px;">PZ250716000002</div><div class="cell" style="left:552px;top:396px;width:67px;letter-spacing:-0.3px;">WANGTIA...</div><div class="cell" style="left:627px;top:396px;width:78px;color:#55585d;">管理员</div><div class="cell" style="left:713px;top:396px;width:102px;letter-spacing:-0.3px;">T-SHIRT</div><div class="cell" style="left:823px;top:396px;width:77px;letter-spacing:-0.3px;">18</div><div class="cell" style="left:908px;top:396px;width:67px;letter-spacing:-0.3px;">435.48</div><div class="cell" style="left:983px;top:396px;width:67px;letter-spacing:-0.3px;">1</div><div class="cell" style="left:1058px;top:396px;width:132px;letter-spacing:-0.3px;">lucky</div><div class="cell" style="left:1198px;top:396px;width:132px;letter-spacing:-0.3px;">15854214588</div><div class="cell" style="left:1338px;top:396px;width:124px;letter-spacing:-0.12px;">2025-07-15 18:14:07</div><div class="cell" style="left:38px;top:420px;width:83px;letter-spacing:-0.3px;">250716000002</div><div class="cell" style="left:129px;top:420px;width:89px;letter-spacing:-0.3px;">GZCA2510004</div><div class="cell" style="left:226px;top:420px;width:132px;color:#55585d;">哥伦比亚空运整票</div><div class="cell" style="left:366px;top:420px;width:72px;letter-spacing:-0.3px;">IMX-KASO</div><div class="cell" style="left:446px;top:420px;width:98px;letter-spacing:-0.3px;">PZ250716000002</div><div class="cell" style="left:552px;top:420px;width:67px;letter-spacing:-0.3px;">WANGTIA...</div><div class="cell" style="left:627px;top:420px;width:78px;color:#55585d;">管理员</div><div class="cell" style="left:713px;top:420px;width:102px;letter-spacing:-0.3px;">T-SHIRT</div><div class="cell" style="left:823px;top:420px;width:77px;letter-spacing:-0.3px;">3</div><div class="cell" style="left:908px;top:420px;width:67px;letter-spacing:-0.3px;">122.9</div><div class="cell" style="left:983px;top:420px;width:67px;letter-spacing:-0.3px;">1</div><div class="cell" style="left:1058px;top:420px;width:132px;letter-spacing:-0.3px;">lucky</div><div class="cell" style="left:1198px;top:420px;width:132px;letter-spacing:-0.3px;">15854214588</div><div class="cell" style="left:1338px;top:420px;width:124px;letter-spacing:-0.12px;">2025-07-16 15:17:23</div><div class="cell" style="left:38px;top:444px;width:83px;letter-spacing:-0.3px;">250716000001</div><div class="cell" style="left:129px;top:444px;width:89px;letter-spacing:-0.3px;">GZCA2510006</div><div class="cell" style="left:226px;top:444px;width:132px;color:#55585d;">哥伦比亚空运整票</div><div class="cell" style="left:366px;top:444px;width:72px;letter-spacing:-0.3px;">KASO</div><div class="cell" style="left:446px;top:444px;width:98px;letter-spacing:-0.3px;">PZ250716000002</div><div class="cell" style="left:552px;top:444px;width:67px;letter-spacing:-0.3px;">WANGTIA...</div><div class="cell" style="left:627px;top:444px;width:78px;color:#55585d;">管理员</div><div class="cell" style="left:713px;top:444px;width:102px;letter-spacing:-0.3px;">T-SHIRT</div><div class="cell" style="left:823px;top:444px;width:77px;letter-spacing:-0.3px;">4</div><div class="cell" style="left:908px;top:444px;width:67px;letter-spacing:-0.3px;">98.02</div><div class="cell" style="left:983px;top:444px;width:67px;letter-spacing:-0.3px;">0.5</div><div class="cell" style="left:1338px;top:444px;width:124px;letter-spacing:-0.12px;">2025-07-16 15:20:21</div><div class="cell" style="left:38px;top:468px;width:83px;letter-spacing:-0.3px;">250507000005</div><div class="cell" style="left:129px;top:468px;width:89px;letter-spacing:-0.3px;">jincang25390...</div><div class="cell" style="left:226px;top:468px;width:132px;color:#55585d;">哥伦比亚海运专线</div><div class="cell" style="left:446px;top:468px;width:98px;letter-spacing:-0.3px;">PZ250507000001</div><div class="cell" style="left:552px;top:468px;width:67px;color:#55585d;">测试小韩</div><div class="cell" style="left:627px;top:468px;width:78px;color:#55585d;">管理员</div><div class="cell" style="left:713px;top:468px;width:102px;letter-spacing:-0.3px;">1111</div><div class="cell" style="left:823px;top:468px;width:77px;letter-spacing:-0.3px;">5</div><div class="cell" style="left:908px;top:468px;width:67px;letter-spacing:-0.3px;">18</div><div class="cell" style="left:983px;top:468px;width:67px;letter-spacing:-0.3px;">1.05</div><div class="cell" style="left:1058px;top:468px;width:132px;color:#55585d;">张张</div><div class="cell" style="left:1198px;top:468px;width:132px;letter-spacing:-0.3px;">18511240401</div><div class="cell" style="left:1338px;top:468px;width:124px;letter-spacing:-0.12px;">2025-05-07 16:38:51</div><div class="cell" style="left:38px;top:492px;width:83px;letter-spacing:-0.3px;">250507000004</div><div class="cell" style="left:129px;top:492px;width:89px;letter-spacing:-0.3px;">jincang25180...</div><div class="cell" style="left:226px;top:492px;width:132px;color:#55585d;">哥伦比亚海运专线</div><div class="cell" style="left:446px;top:492px;width:98px;letter-spacing:-0.3px;">PZ250507000001</div><div class="cell" style="left:552px;top:492px;width:67px;color:#55585d;">测试小韩</div><div class="cell" style="left:627px;top:492px;width:78px;color:#55585d;">管理员</div><div class="cell" style="left:823px;top:492px;width:77px;letter-spacing:-0.3px;">20</div><div class="cell" style="left:908px;top:492px;width:67px;letter-spacing:-0.3px;">15</div><div class="cell" style="left:983px;top:492px;width:67px;letter-spacing:-0.3px;">0.07</div><div class="cell" style="left:1058px;top:492px;width:132px;color:#55585d;">张张</div><div class="cell" style="left:1198px;top:492px;width:132px;letter-spacing:-0.3px;">18511240401</div><div class="cell" style="left:1338px;top:492px;width:124px;letter-spacing:-0.12px;">2025-05-07 16:04:53</div><div class="a" style="left:903px;top:275px;width:75px;height:24px;border:2px solid #3b94f5;background:#c5e3ff"></div><div class="cell" style="left:908px;top:276px;letter-spacing:-0.3px">0.3</div><div class="cell" style="left:823px;top:594px;font-weight:bold;color:#303133;letter-spacing:-0.2px">218.000</div><div class="cell" style="left:908px;top:594px;font-weight:bold;color:#303133;letter-spacing:-0.2px">2,006.100</div><div class="cell" style="left:983px;top:594px;font-weight:bold;color:#303133;letter-spacing:-0.2px">306.100</div><div class="hcell" style="left:1573px;top:0;width:8px;overflow:hidden">描述</div><div class="a" style="left:1571px;top:0;width:8px;height:623px;background:linear-gradient(to right,rgba(0,0,0,0),rgba(0,0,0,0.06))"></div><div class="a" style="left:1579px;top:0;width:59px;height:35px;background:#f8f8f9"></div><div class="a" style="left:1579px;top:35px;width:59px;height:480px;background:#fff"></div><div class="a" style="left:1579px;top:251px;width:59px;height:24px;background:#f5f7fa"></div><div class="a" style="left:1579px;top:275px;width:59px;height:24px;background:#e6f7ff"></div><div class="hl" style="left:1579px;top:34px;width:59px"></div><div class="hl" style="left:1579px;top:58px;width:59px"></div><div class="hl" style="left:1579px;top:82px;width:59px"></div><div class="hl" style="left:1579px;top:106px;width:59px"></div><div class="hl" style="left:1579px;top:130px;width:59px"></div><div class="hl" style="left:1579px;top:154px;width:59px"></div><div class="hl" style="left:1579px;top:178px;width:59px"></div><div class="hl" style="left:1579px;top:202px;width:59px"></div><div class="hl" style="left:1579px;top:226px;width:59px"></div><div class="hl" style="left:1579px;top:250px;width:59px"></div><div class="hl" style="left:1579px;top:274px;width:59px"></div><div class="hl" style="left:1579px;top:298px;width:59px"></div><div class="hl" style="left:1579px;top:322px;width:59px"></div><div class="hl" style="left:1579px;top:346px;width:59px"></div><div class="hl" style="left:1579px;top:370px;width:59px"></div><div class="hl" style="left:1579px;top:394px;width:59px"></div><div class="hl" style="left:1579px;top:418px;width:59px"></div><div class="hl" style="left:1579px;top:442px;width:59px"></div><div class="hl" style="left:1579px;top:466px;width:59px"></div><div class="hl" style="left:1579px;top:490px;width:59px"></div><div class="hl" style="left:1579px;top:514px;width:59px"></div><div class="hcell" style="left:1585px;top:0">操作</div><div class="a" style="left:1585px;top:40px"><svg width="15" height="15" viewBox="0 0 15 15" fill="none" stroke="#1f80f0" stroke-width="1.1"><circle cx="6.4" cy="6.4" r="5.9"/><path d="M10.6 10.6L13.6 13.6"/></svg></div><div class="a" style="left:1616px;top:41px"><svg width="14" height="14" viewBox="0 0 14 14" fill="none" stroke="#1f80f0" stroke-width="1.1"><path d="M6.8 0.6H0.6V12.4H12.4V5.8"/><path d="M4.9 8.3L5.3 6.4L11.2 0.7L12.9 2.3L6.9 7.9Z" stroke-linejoin="round"/></svg></div><div class="a" style="left:1585px;top:64px"><svg width="15" height="15" viewBox="0 0 15 15" fill="none" stroke="#1f80f0" stroke-width="1.1"><circle cx="6.4" cy="6.4" r="5.9"/><path d="M10.6 10.6L13.6 13.6"/></svg></div><div class="a" style="left:1616px;top:65px"><svg width="14" height="14" viewBox="0 0 14 14" fill="none" stroke="#1f80f0" stroke-width="1.1"><path d="M6.8 0.6H0.6V12.4H12.4V5.8"/><path d="M4.9 8.3L5.3 6.4L11.2 0.7L12.9 2.3L6.9 7.9Z" stroke-linejoin="round"/></svg></div><div class="a" style="left:1585px;top:88px"><svg width="15" height="15" viewBox="0 0 15 15" fill="none" stroke="#1f80f0" stroke-width="1.1"><circle cx="6.4" cy="6.4" r="5.9"/><path d="M10.6 10.6L13.6 13.6"/></svg></div><div class="a" style="left:1616px;top:89px"><svg width="14" height="14" viewBox="0 0 14 14" fill="none" stroke="#1f80f0" stroke-width="1.1"><path d="M6.8 0.6H0.6V12.4H12.4V5.8"/><path d="M4.9 8.3L5.3 6.4L11.2 0.7L12.9 2.3L6.9 7.9Z" stroke-linejoin="round"/></svg></div><div class="a" style="left:1585px;top:112px"><svg width="15" height="15" viewBox="0 0 15 15" fill="none" stroke="#1f80f0" stroke-width="1.1"><circle cx="6.4" cy="6.4" r="5.9"/><path d="M10.6 10.6L13.6 13.6"/></svg></div><div class="a" style="left:1616px;top:113px"><svg width="14" height="14" viewBox="0 0 14 14" fill="none" stroke="#1f80f0" stroke-width="1.1"><path d="M6.8 0.6H0.6V12.4H12.4V5.8"/><path d="M4.9 8.3L5.3 6.4L11.2 0.7L12.9 2.3L6.9 7.9Z" stroke-linejoin="round"/></svg></div><div class="a" style="left:1585px;top:136px"><svg width="15" height="15" viewBox="0 0 15 15" fill="none" stroke="#1f80f0" stroke-width="1.1"><circle cx="6.4" cy="6.4" r="5.9"/><path d="M10.6 10.6L13.6 13.6"/></svg></div><div class="a" style="left:1616px;top:137px"><svg width="14" height="14" viewBox="0 0 14 14" fill="none" stroke="#1f80f0" stroke-width="1.1"><path d="M6.8 0.6H0.6V12.4H12.4V5.8"/><path d="M4.9 8.3L5.3 6.4L11.2 0.7L12.9 2.3L6.9 7.9Z" stroke-linejoin="round"/></svg></div><div class="a" style="left:1585px;top:160px"><svg width="15" height="15" viewBox="0 0 15 15" fill="none" stroke="#1f80f0" stroke-width="1.1"><circle cx="6.4" cy="6.4" r="5.9"/><path d="M10.6 10.6L13.6 13.6"/></svg></div><div class="a" style="left:1616px;top:161px"><svg width="14" height="14" viewBox="0 0 14 14" fill="none" stroke="#1f80f0" stroke-width="1.1"><path d="M6.8 0.6H0.6V12.4H12.4V5.8"/><path d="M4.9 8.3L5.3 6.4L11.2 0.7L12.9 2.3L6.9 7.9Z" stroke-linejoin="round"/></svg></div><div class="a" style="left:1585px;top:184px"><svg width="15" height="15" viewBox="0 0 15 15" fill="none" stroke="#1f80f0" stroke-width="1.1"><circle cx="6.4" cy="6.4" r="5.9"/><path d="M10.6 10.6L13.6 13.6"/></svg></div><div class="a" style="left:1616px;top:185px"><svg width="14" height="14" viewBox="0 0 14 14" fill="none" stroke="#1f80f0" stroke-width="1.1"><path d="M6.8 0.6H0.6V12.4H12.4V5.8"/><path d="M4.9 8.3L5.3 6.4L11.2 0.7L12.9 2.3L6.9 7.9Z" stroke-linejoin="round"/></svg></div><div class="a" style="left:1585px;top:208px"><svg width="15" height="15" viewBox="0 0 15 15" fill="none" stroke="#1f80f0" stroke-width="1.1"><circle cx="6.4" cy="6.4" r="5.9"/><path d="M10.6 10.6L13.6 13.6"/></svg></div><div class="a" style="left:1616px;top:209px"><svg width="14" height="14" viewBox="0 0 14 14" fill="none" stroke="#1f80f0" stroke-width="1.1"><path d="M6.8 0.6H0.6V12.4H12.4V5.8"/><path d="M4.9 8.3L5.3 6.4L11.2 0.7L12.9 2.3L6.9 7.9Z" stroke-linejoin="round"/></svg></div><div class="a" style="left:1585px;top:232px"><svg width="15" height="15" viewBox="0 0 15 15" fill="none" stroke="#1f80f0" stroke-width="1.1"><circle cx="6.4" cy="6.4" r="5.9"/><path d="M10.6 10.6L13.6 13.6"/></svg></div><div class="a" style="left:1616px;top:233px"><svg width="14" height="14" viewBox="0 0 14 14" fill="none" stroke="#1f80f0" stroke-width="1.1"><path d="M6.8 0.6H0.6V12.4H12.4V5.8"/><path d="M4.9 8.3L5.3 6.4L11.2 0.7L12.9 2.3L6.9 7.9Z" stroke-linejoin="round"/></svg></div><div class="a" style="left:1585px;top:256px"><svg width="15" height="15" viewBox="0 0 15 15" fill="none" stroke="#1f80f0" stroke-width="1.1"><circle cx="6.4" cy="6.4" r="5.9"/><path d="M10.6 10.6L13.6 13.6"/></svg></div><div class="a" style="left:1616px;top:257px"><svg width="14" height="14" viewBox="0 0 14 14" fill="none" stroke="#1f80f0" stroke-width="1.1"><path d="M6.8 0.6H0.6V12.4H12.4V5.8"/><path d="M4.9 8.3L5.3 6.4L11.2 0.7L12.9 2.3L6.9 7.9Z" stroke-linejoin="round"/></svg></div><div class="a" style="left:1585px;top:280px"><svg width="15" height="15" viewBox="0 0 15 15" fill="none" stroke="#1f80f0" stroke-width="1.1"><circle cx="6.4" cy="6.4" r="5.9"/><path d="M10.6 10.6L13.6 13.6"/></svg></div><div class="a" style="left:1616px;top:281px"><svg width="14" height="14" viewBox="0 0 14 14" fill="none" stroke="#1f80f0" stroke-width="1.1"><path d="M6.8 0.6H0.6V12.4H12.4V5.8"/><path d="M4.9 8.3L5.3 6.4L11.2 0.7L12.9 2.3L6.9 7.9Z" stroke-linejoin="round"/></svg></div><div class="a" style="left:1585px;top:304px"><svg width="15" height="15" viewBox="0 0 15 15" fill="none" stroke="#1f80f0" stroke-width="1.1"><circle cx="6.4" cy="6.4" r="5.9"/><path d="M10.6 10.6L13.6 13.6"/></svg></div><div class="a" style="left:1616px;top:305px"><svg width="14" height="14" viewBox="0 0 14 14" fill="none" stroke="#1f80f0" stroke-width="1.1"><path d="M6.8 0.6H0.6V12.4H12.4V5.8"/><path d="M4.9 8.3L5.3 6.4L11.2 0.7L12.9 2.3L6.9 7.9Z" stroke-linejoin="round"/></svg></div><div class="a" style="left:1585px;top:328px"><svg width="15" height="15" viewBox="0 0 15 15" fill="none" stroke="#1f80f0" stroke-width="1.1"><circle cx="6.4" cy="6.4" r="5.9"/><path d="M10.6 10.6L13.6 13.6"/></svg></div><div class="a" style="left:1616px;top:329px"><svg width="14" height="14" viewBox="0 0 14 14" fill="none" stroke="#1f80f0" stroke-width="1.1"><path d="M6.8 0.6H0.6V12.4H12.4V5.8"/><path d="M4.9 8.3L5.3 6.4L11.2 0.7L12.9 2.3L6.9 7.9Z" stroke-linejoin="round"/></svg></div><div class="a" style="left:1585px;top:352px"><svg width="15" height="15" viewBox="0 0 15 15" fill="none" stroke="#1f80f0" stroke-width="1.1"><circle cx="6.4" cy="6.4" r="5.9"/><path d="M10.6 10.6L13.6 13.6"/></svg></div><div class="a" style="left:1616px;top:353px"><svg width="14" height="14" viewBox="0 0 14 14" fill="none" stroke="#1f80f0" stroke-width="1.1"><path d="M6.8 0.6H0.6V12.4H12.4V5.8"/><path d="M4.9 8.3L5.3 6.4L11.2 0.7L12.9 2.3L6.9 7.9Z" stroke-linejoin="round"/></svg></div><div class="a" style="left:1585px;top:376px"><svg width="15" height="15" viewBox="0 0 15 15" fill="none" stroke="#1f80f0" stroke-width="1.1"><circle cx="6.4" cy="6.4" r="5.9"/><path d="M10.6 10.6L13.6 13.6"/></svg></div><div class="a" style="left:1616px;top:377px"><svg width="14" height="14" viewBox="0 0 14 14" fill="none" stroke="#1f80f0" stroke-width="1.1"><path d="M6.8 0.6H0.6V12.4H12.4V5.8"/><path d="M4.9 8.3L5.3 6.4L11.2 0.7L12.9 2.3L6.9 7.9Z" stroke-linejoin="round"/></svg></div><div class="a" style="left:1585px;top:400px"><svg width="15" height="15" viewBox="0 0 15 15" fill="none" stroke="#1f80f0" stroke-width="1.1"><circle cx="6.4" cy="6.4" r="5.9"/><path d="M10.6 10.6L13.6 13.6"/></svg></div><div class="a" style="left:1616px;top:401px"><svg width="14" height="14" viewBox="0 0 14 14" fill="none" stroke="#1f80f0" stroke-width="1.1"><path d="M6.8 0.6H0.6V12.4H12.4V5.8"/><path d="M4.9 8.3L5.3 6.4L11.2 0.7L12.9 2.3L6.9 7.9Z" stroke-linejoin="round"/></svg></div><div class="a" style="left:1585px;top:424px"><svg width="15" height="15" viewBox="0 0 15 15" fill="none" stroke="#1f80f0" stroke-width="1.1"><circle cx="6.4" cy="6.4" r="5.9"/><path d="M10.6 10.6L13.6 13.6"/></svg></div><div class="a" style="left:1616px;top:425px"><svg width="14" height="14" viewBox="0 0 14 14" fill="none" stroke="#1f80f0" stroke-width="1.1"><path d="M6.8 0.6H0.6V12.4H12.4V5.8"/><path d="M4.9 8.3L5.3 6.4L11.2 0.7L12.9 2.3L6.9 7.9Z" stroke-linejoin="round"/></svg></div><div class="a" style="left:1585px;top:448px"><svg width="15" height="15" viewBox="0 0 15 15" fill="none" stroke="#1f80f0" stroke-width="1.1"><circle cx="6.4" cy="6.4" r="5.9"/><path d="M10.6 10.6L13.6 13.6"/></svg></div><div class="a" style="left:1616px;top:449px"><svg width="14" height="14" viewBox="0 0 14 14" fill="none" stroke="#1f80f0" stroke-width="1.1"><path d="M6.8 0.6H0.6V12.4H12.4V5.8"/><path d="M4.9 8.3L5.3 6.4L11.2 0.7L12.9 2.3L6.9 7.9Z" stroke-linejoin="round"/></svg></div><div class="a" style="left:1585px;top:472px"><svg width="15" height="15" viewBox="0 0 15 15" fill="none" stroke="#1f80f0" stroke-width="1.1"><circle cx="6.4" cy="6.4" r="5.9"/><path d="M10.6 10.6L13.6 13.6"/></svg></div><div class="a" style="left:1616px;top:473px"><svg width="14" height="14" viewBox="0 0 14 14" fill="none" stroke="#1f80f0" stroke-width="1.1"><path d="M6.8 0.6H0.6V12.4H12.4V5.8"/><path d="M4.9 8.3L5.3 6.4L11.2 0.7L12.9 2.3L6.9 7.9Z" stroke-linejoin="round"/></svg></div><div class="a" style="left:1585px;top:496px"><svg width="15" height="15" viewBox="0 0 15 15" fill="none" stroke="#1f80f0" stroke-width="1.1"><circle cx="6.4" cy="6.4" r="5.9"/><path d="M10.6 10.6L13.6 13.6"/></svg></div><div class="a" style="left:1616px;top:497px"><svg width="14" height="14" viewBox="0 0 14 14" fill="none" stroke="#1f80f0" stroke-width="1.1"><path d="M6.8 0.6H0.6V12.4H12.4V5.8"/><path d="M4.9 8.3L5.3 6.4L11.2 0.7L12.9 2.3L6.9 7.9Z" stroke-linejoin="round"/></svg></div><div class="a" style="left:0;top:623px;width:547px;height:6px;background:#a3a6ad;border-radius:0 3px 3px 0"></div></div><svg class="a" style="left:1874px;top:259px" width="14" height="14" viewBox="0 0 14 14" fill="none" stroke="#606266" stroke-width="1.1" stroke-linejoin="round"><path d="M11.66 4.98 L13.20 5.61 L13.20 8.39 L11.66 9.02 L11.08 10.03 L11.30 11.67 L8.90 13.06 L7.58 12.05 L6.42 12.05 L5.10 13.06 L2.70 11.67 L2.92 10.03 L2.34 9.02 L0.80 8.39 L0.80 5.61 L2.34 4.98 L2.92 3.97 L2.70 2.33 L5.10 0.94 L6.42 1.95 L7.58 1.95 L8.90 0.94 L11.30 2.33 L11.08 3.97Z"/><circle cx="7.0" cy="7.0" r="2.66"/></svg><div class="a" style="left:1463px;top:898px;font-size:13px;line-height:20px;color:#606266;white-space:nowrap">共 30 条</div><div class="a inp" style="left:1522px;top:895px;width:69px;height:28px;text-align:center;line-height:26px;font-size:13px;color:#606266">20</div><div class="a" style="left:1595px;top:898px;font-size:13px;line-height:20px;color:#606266;white-space:nowrap">条/页</div><svg class="a" style="left:1636px;top:904px" width="7" height="11" viewBox="0 0 7 11" fill="none" stroke="#c0c4cc" stroke-width="1.4"><path d="M6 0.8L1.3 5.5L6 10.2"/></svg><div class="a" style="left:1675px;top:898px;font-size:13px;line-height:20px;font-weight:bold;color:#409eff">1</div><div class="a" style="left:1710px;top:898px;font-size:13px;line-height:20px;font-weight:bold;color:#303133">2</div><svg class="a" style="left:1749px;top:904px" width="7" height="11" viewBox="0 0 7 11" fill="none" stroke="#303133" stroke-width="1.4"><path d="M1 0.8L5.7 5.5L1 10.2"/></svg><div class="a" style="left:1791px;top:898px;font-size:13px;line-height:20px;color:#606266;white-space:nowrap">前往</div><div class="a inp" style="left:1821px;top:895px;width:45px;height:28px;text-align:center;line-height:26px;font-size:13px;color:#606266">1</div><div class="a" style="left:1870px;top:898px;font-size:13px;line-height:20px;color:#606266">页</div></body></html>
